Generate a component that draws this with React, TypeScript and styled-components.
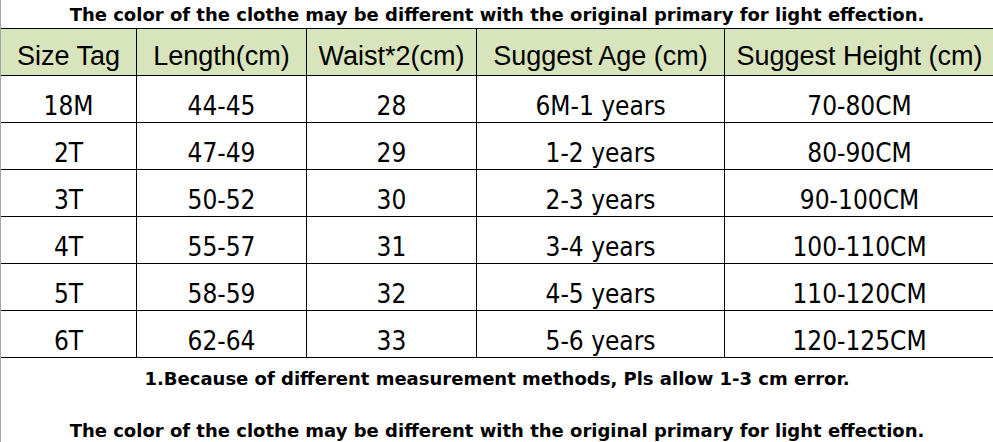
import styled, { createGlobalStyle } from 'styled-components';

const GlobalStyle = createGlobalStyle`
  html, body {
    margin: 0;
    padding: 0;
    background: #fff;
  }
`;

const Page = styled.div`
  width: 993px;
  height: 442px;
  overflow: hidden;
  border-left: 1px solid #a6a6a6;
  box-sizing: border-box;
  display: flex;
  flex-direction: column;
`;

const Note = styled.div<{ $h: number }>`
  height: ${({ $h }) => $h}px;
  display: flex;
  align-items: center;
  justify-content: center;
  font-family: 'DejaVu Sans', sans-serif;
  font-weight: bold;
  font-size: 18px;
  color: #000;
  white-space: nowrap;
  flex-shrink: 0;
`;

const Table = styled.table`
  border-collapse: collapse;
  table-layout: fixed;
  width: 994px;
  margin-left: -1px;
  flex-shrink: 0;
`;

const Row = styled.tr`
  height: 47px;
`;

const Head = styled.th`
  padding: 0 0 4px;
  background: #d8e4bc;
  border: 1px solid #000;
  font-family: 'Liberation Sans', Arial, sans-serif;
  font-weight: normal;
  font-size: 27px;
  line-height: 30px;
  color: #000;
  vertical-align: bottom;
  white-space: nowrap;
`;

const Cell = styled.td`
  padding: 0 0 1px;
  border: 1px solid #000;
  font-family: 'DejaVu Sans Condensed', 'DejaVu Sans', sans-serif;
  font-size: 26px;
  line-height: 30px;
  color: #000;
  text-align: center;
  vertical-align: bottom;
  white-space: nowrap;
`;

const widths = [136, 170, 170, 248, 270];
const heads = ['Size Tag', 'Length(cm)', 'Waist*2(cm)', 'Suggest Age (cm)', 'Suggest Height (cm)'];
const rows = [
  ['18M', '44-45', '28', '6M-1 years', '70-80CM'],
  ['2T', '47-49', '29', '1-2 years', '80-90CM'],
  ['3T', '50-52', '30', '2-3 years', '90-100CM'],
  ['4T', '55-57', '31', '3-4 years', '100-110CM'],
  ['5T', '58-59', '32', '4-5 years', '110-120CM'],
  ['6T', '62-64', '33', '5-6 years', '120-125CM'],
];

const colorNote =
  'The color of the clothe may be different with the original primary for light effection.';

export default function App() {
  return (
    <Page>
      <GlobalStyle />
      <Note $h={28}>{colorNote}</Note>
      <Table>
        <colgroup>
          {widths.map((w, i) => (
            <col key={i} style={{ width: w }} />
          ))}
        </colgroup>
        <thead>
          <Row>
            {heads.map(h => (
              <Head key={h}>{h}</Head>
            ))}
          </Row>
        </thead>
        <tbody>
          {rows.map(r => (
            <Row key={r[0]}>
              {r.map((c, i) => (
                <Cell key={i}>{c}</Cell>
              ))}
            </Row>
          ))}
        </tbody>
      </Table>
      <Note $h={40}>
        1.Because of different measurement methods, Pls allow 1-3 cm error.
      </Note>
      <Note $h={64}>{colorNote}</Note>
    </Page>
  );
}
